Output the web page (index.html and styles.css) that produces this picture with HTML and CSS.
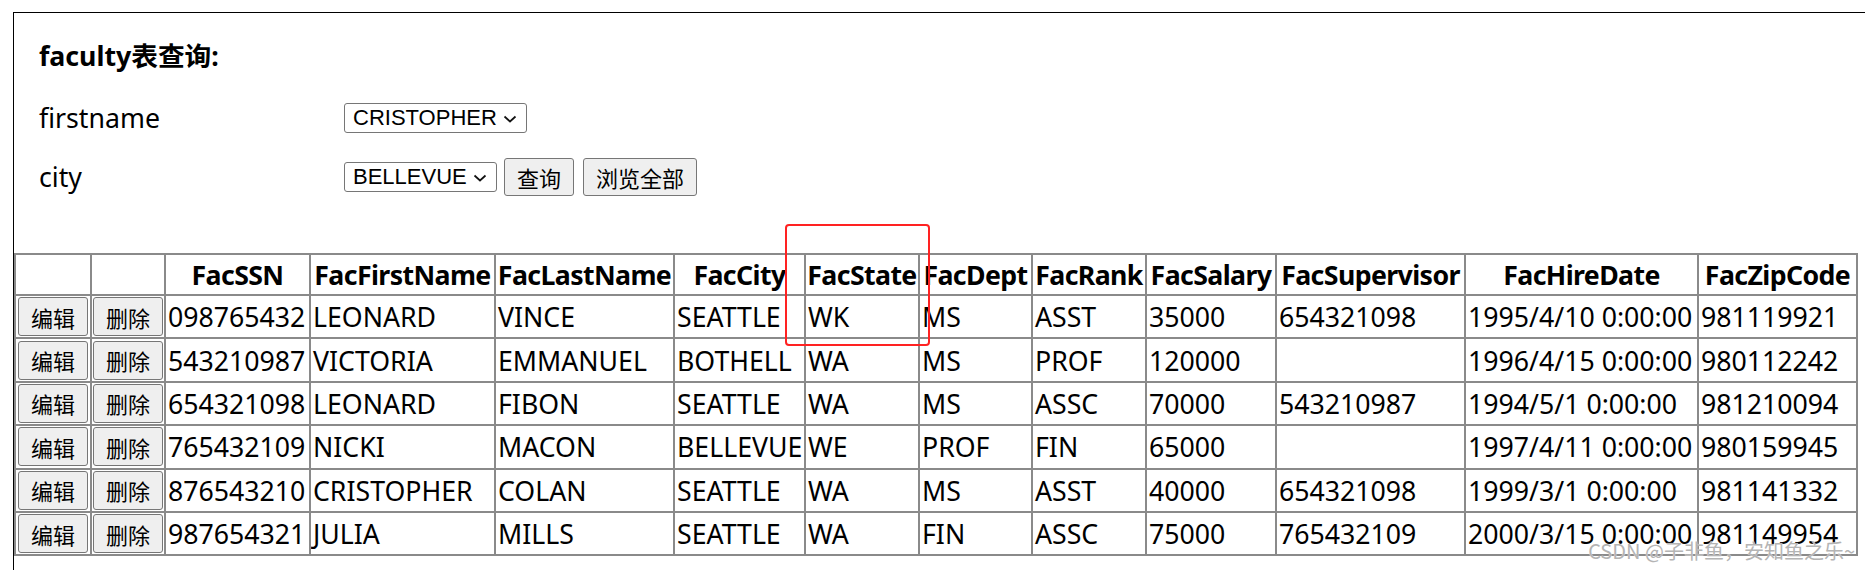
FILE: index.html
```html
<!DOCTYPE html>
<html lang="zh-CN">
<head>
<meta charset="utf-8">
<title>faculty表查询</title>
<link rel="stylesheet" href="styles.css">
</head>
<body>
<div class="frame">
  <h3 class="title">faculty表查询:</h3>
  <div class="form">
    <span class="label">firstname</span>
    <div class="controls">
      <span class="select-wrap">
        <select class="select">
          <option>LEONARD</option>
          <option>VICTORIA</option>
          <option>NICKI</option>
          <option selected>CRISTOPHER</option>
          <option>JULIA</option>
        </select>
        <svg class="chev" width="14" height="8" viewBox="0 0 14 8"><polyline points="1.5,1.5 7,6.5 12.5,1.5" fill="none" stroke="#111" stroke-width="1.7"/></svg>
      </span>
    </div>
    <span class="label">city</span>
    <div class="controls">
      <span class="select-wrap">
        <select class="select">
          <option>SEATTLE</option>
          <option>BOTHELL</option>
          <option selected>BELLEVUE</option>
        </select>
        <svg class="chev" width="14" height="8" viewBox="0 0 14 8"><polyline points="1.5,1.5 7,6.5 12.5,1.5" fill="none" stroke="#111" stroke-width="1.7"/></svg>
      </span>
      <button class="btn btn-query">查询</button>
      <button class="btn btn-all">浏览全部</button>
    </div>
  </div>

  <table class="grid">
    <colgroup>
      <col class="c-edit"><col class="c-del"><col class="c-ssn"><col class="c-first"><col class="c-last">
      <col class="c-city"><col class="c-state"><col class="c-dept"><col class="c-rank"><col class="c-sal">
      <col class="c-sup"><col class="c-hire"><col class="c-zip">
    </colgroup>
    <thead>
      <tr>
        <th></th><th></th><th>FacSSN</th><th>FacFirstName</th><th>FacLastName</th><th>FacCity</th>
        <th>FacState</th><th>FacDept</th><th>FacRank</th><th>FacSalary</th><th>FacSupervisor</th>
        <th>FacHireDate</th><th>FacZipCode</th>
      </tr>
    </thead>
    <tbody>
      <tr>
        <td class="act"><button class="btn btn-cell">编辑</button></td><td class="act"><button class="btn btn-cell">删除</button></td>
        <td>098765432</td><td>LEONARD</td><td>VINCE</td><td>SEATTLE</td><td>WK</td><td>MS</td><td>ASST</td><td>35000</td><td>654321098</td><td>1995/4/10 0:00:00</td><td>981119921</td>
      </tr>
      <tr>
        <td class="act"><button class="btn btn-cell">编辑</button></td><td class="act"><button class="btn btn-cell">删除</button></td>
        <td>543210987</td><td>VICTORIA</td><td>EMMANUEL</td><td>BOTHELL</td><td>WA</td><td>MS</td><td>PROF</td><td>120000</td><td></td><td>1996/4/15 0:00:00</td><td>980112242</td>
      </tr>
      <tr>
        <td class="act"><button class="btn btn-cell">编辑</button></td><td class="act"><button class="btn btn-cell">删除</button></td>
        <td>654321098</td><td>LEONARD</td><td>FIBON</td><td>SEATTLE</td><td>WA</td><td>MS</td><td>ASSC</td><td>70000</td><td>543210987</td><td>1994/5/1 0:00:00</td><td>981210094</td>
      </tr>
      <tr>
        <td class="act"><button class="btn btn-cell">编辑</button></td><td class="act"><button class="btn btn-cell">删除</button></td>
        <td>765432109</td><td>NICKI</td><td>MACON</td><td>BELLEVUE</td><td>WE</td><td>PROF</td><td>FIN</td><td>65000</td><td></td><td>1997/4/11 0:00:00</td><td>980159945</td>
      </tr>
      <tr>
        <td class="act"><button class="btn btn-cell">编辑</button></td><td class="act"><button class="btn btn-cell">删除</button></td>
        <td>876543210</td><td>CRISTOPHER</td><td>COLAN</td><td>SEATTLE</td><td>WA</td><td>MS</td><td>ASST</td><td>40000</td><td>654321098</td><td>1999/3/1 0:00:00</td><td>981141332</td>
      </tr>
      <tr>
        <td class="act"><button class="btn btn-cell">编辑</button></td><td class="act"><button class="btn btn-cell">删除</button></td>
        <td>987654321</td><td>JULIA</td><td>MILLS</td><td>SEATTLE</td><td>WA</td><td>FIN</td><td>ASSC</td><td>75000</td><td>765432109</td><td>2000/3/15 0:00:00</td><td>981149954</td>
      </tr>
    </tbody>
  </table>
</div>
<div class="highlight"></div>
<div class="watermark">CSDN @子非鱼，安知鱼之乐~</div>
</body>
</html>
```

FILE: styles.css
```css
html, body {
  margin: 0;
  padding: 0;
  background: #fff;
}

body {
  position: relative;
  width: 1865px;
  height: 570px;
  overflow: hidden;
  font-family: "Noto Sans", "Noto Sans CJK SC", sans-serif;
  font-size: 26.7px;
  color: #000;
}

.frame {
  margin: 12px 0 0 13px;
  border-top: 1px solid #000;
  border-left: 1px solid #000;
  height: 600px;
}

.title {
  margin: 25px 0 0 25px;
  font-size: 26.7px;
  font-weight: 700;
  line-height: 36px;
}

.form {
  margin: 24px 0 0 25px;
  display: grid;
  grid-template-columns: 305px auto;
  grid-template-rows: 40px 44px;
  row-gap: 17px;
  align-items: center;
}

.label {
  line-height: 36px;
}

.controls {
  display: flex;
  align-items: center;
}

.select-wrap {
  position: relative;
  display: block;
}

.select {
  display: block;
  appearance: none;
  -webkit-appearance: none;
  height: 30px;
  margin: 0;
  padding: 0 29px 0 8px;
  border: 1px solid #767676;
  border-radius: 3px;
  background: #fff;
  color: #000;
  font-family: "Liberation Sans", Arial, sans-serif;
  font-size: 22px;
  line-height: 28px;
}

.chev {
  position: absolute;
  right: 10px;
  top: 12px;
  pointer-events: none;
}

.btn {
  margin: 0;
  padding: 0 12px;
  border: 1px solid #767676;
  border-radius: 3px;
  background: #efefef;
  color: #000;
  font-family: "Noto Sans CJK SC", "Noto Sans", sans-serif;
  font-size: 22px;
  line-height: 1;
}

.btn-query {
  height: 38px;
  margin-left: 7px;
}

.btn-all {
  height: 38px;
  margin-left: 9px;
}

.btn-cell {
  display: block;
  width: 70px;
  height: 39px;
  margin: 0 auto;
  padding: 0;
}

.grid {
  margin-top: 54px;
  border-collapse: collapse;
  table-layout: fixed;
  width: 1844px;
}

.grid th,
.grid td {
  border: 2px solid #8a8a8a;
  padding: 0 2px;
  white-space: nowrap;
}

.grid th {
  font-weight: 700;
  text-align: center;
  line-height: 39px;
  padding: 0;
  letter-spacing: -0.6px;
}

.grid td {
  text-align: left;
  line-height: 41px;
  height: 41.4px;
  overflow: hidden;
}

.grid td.act {
  padding: 0;
  line-height: 0;
}

.c-edit { width: 76px; }
.c-del { width: 74px; }
.c-ssn { width: 145px; }
.c-first { width: 185px; }
.c-last { width: 179px; }
.c-city { width: 131px; }
.c-state { width: 114px; }
.c-dept { width: 113px; }
.c-rank { width: 114px; }
.c-sal { width: 130px; }
.c-sup { width: 189px; }
.c-hire { width: 233px; }
.c-zip { width: 159px; }

.highlight {
  position: absolute;
  left: 785px;
  top: 224px;
  width: 141px;
  height: 118px;
  border: 2px solid #f22;
  border-radius: 4px;
}

.watermark {
  position: absolute;
  right: 10px;
  top: 537px;
  font-family: "Noto Sans CJK SC", sans-serif;
  font-size: 20px;
  line-height: 28px;
  color: #b4b4b4;
  text-shadow: 0 0 1px #fff;
  white-space: nowrap;
}
```
